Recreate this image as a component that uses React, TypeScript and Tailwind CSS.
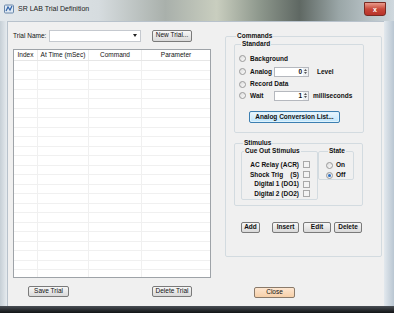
import React from 'react'

const font = "font-['Liberation_Sans',Arial,sans-serif]"

function Btn({ children, className = '' }: { children: React.ReactNode; className?: string }) {
  return (
    <button
      className={`h-[11px] border border-[#7a7a7a] rounded-[2px] bg-linear-to-b from-[#f7f7f7] to-[#d9d9d9] text-[6.5px] leading-none text-[#111] flex items-center justify-center ${className}`}
    >
      {children}
    </button>
  )
}

function Radio({ checked = false }: { checked?: boolean }) {
  return (
    <span className="w-[7px] h-[7px] shrink-0 rounded-full border border-[#9a9a9a] bg-linear-to-br from-[#dcdcdc] to-[#fbfbfb] flex items-center justify-center">
      {checked && <span className="w-[3px] h-[3px] rounded-full bg-[#2c6fc4]" />}
    </span>
  )
}

function Check() {
  return <span className="w-[7px] h-[7px] shrink-0 border border-[#a8a8a8] bg-[#f3f3f3]" />
}

function Spin({ value }: { value: string }) {
  return (
    <div className="w-[35px] h-[10px] border border-[#b5b8be] bg-white flex items-stretch">
      <span className="flex-1 text-right pr-[1px] leading-[8px] font-bold">{value}</span>
      <span className="w-[5px] flex flex-col items-center justify-center gap-[1px] bg-[#eef0f2]">
        <svg width="3" height="2" viewBox="0 0 3 2"><path d="M0 2L1.5 0L3 2Z" fill="#555" /></svg>
        <svg width="3" height="2" viewBox="0 0 3 2"><path d="M0 0L1.5 2L3 0Z" fill="#555" /></svg>
      </span>
    </div>
  )
}

function Group({ label, className = '', children }: { label: string; className?: string; children: React.ReactNode }) {
  return (
    <fieldset className={`border border-[#d3dbe0] rounded-[2px] ${className}`}>
      <legend className="ml-[2px] px-[1px] font-bold leading-[8px]">{label}</legend>
      {children}
    </fieldset>
  )
}

export default function App() {
  const rows = Array.from({ length: 23 })
  return (
    <div className={`w-[394px] h-[313px] flex flex-col overflow-hidden bg-[#cfd8df] text-[6.5px] text-[#111] ${font}`}>
      {/* title bar */}
      <div className="h-[21px] shrink-0 flex items-start bg-[linear-gradient(90deg,#e3e8ec_0%,#d6dcdf_25%,#a9b0ab_42%,#c9cebf_55%,#8d978c_66%,#5f6863_76%,#9aa6a7_86%,#cfd8de_100%)]">
        <svg className="ml-[4px] mt-[4px]" width="10" height="10" viewBox="0 0 10 10">
          <rect x="0.5" y="1" width="9" height="8" rx="1" fill="#dfe9f4" stroke="#6a88aa" />
          <path d="M2 7L4 3L6 6L8 2" stroke="#2f62a8" strokeWidth="1.2" fill="none" />
        </svg>
        <span className="ml-[4px] mt-[5px] text-[7px] leading-[8px] text-[#222]">SR LAB Trial Definition</span>
        <div className="ml-auto mr-[8px] w-[22px] h-[14px] mt-[2px] rounded-b-[3px] border border-[#7a2a22] bg-linear-to-b from-[#e99a8c] via-[#c8483a] to-[#b8322a] flex items-center justify-center">
          <span className="text-white font-bold text-[7px] leading-none">x</span>
        </div>
      </div>

      <div className="flex-1 flex">
        <div className="w-[7px] shrink-0 bg-linear-to-r from-[#c6cfd6] to-[#e6ebef]" />
        {/* client */}
        <div className="w-[377px] h-[285px] bg-[#f0f0f0] flex pl-[5px] pt-[7px] border-l border-t border-[#b8c2cc]">
          {/* left column */}
          <div className="w-[198px] flex flex-col">
            <div className="h-[13px] flex items-center">
              <span className="w-[36px]">Trial Name:</span>
              <div className="w-[92px] h-[12px] border border-[#c5c9cf] bg-white flex items-center justify-end pr-[3px]">
                <svg width="4" height="3" viewBox="0 0 4 3"><path d="M0 0H4L2 3Z" fill="#222" /></svg>
              </div>
              <Btn className="ml-[11px] w-[40px] h-[12px]">New Trial...</Btn>
            </div>
            <div className="mt-[7px] h-[229px] border border-[#9ea3a8] bg-white overflow-hidden">
              <div className="h-[11px] flex border-b border-[#e6e6e6] text-[6.5px]">
                <div className="w-[24px] flex items-center justify-center border-r border-[#ececec]">Index</div>
                <div className="w-[51px] flex items-center justify-center border-r border-[#ececec]">At Time (mSec)</div>
                <div className="w-[53px] flex items-center justify-center border-r border-[#ececec]">Command</div>
                <div className="flex-1 flex items-center justify-center">Parameter</div>
              </div>
              {rows.map((_, i) => (
                <div key={i} className="h-[9.5px] flex border-b border-[#f0f0f0]">
                  <div className="w-[24px] border-r border-[#f0f0f0]" />
                  <div className="w-[51px] border-r border-[#f0f0f0]" />
                  <div className="w-[53px] border-r border-[#f0f0f0]" />
                  <div className="flex-1" />
                </div>
              ))}
            </div>
            <div className="mt-[8px] flex">
              <Btn className="ml-[15px] w-[41px]">Save Trial</Btn>
              <Btn className="ml-[83px] w-[40px]">Delete Trial</Btn>
            </div>
          </div>

          {/* right column */}
          <div className="ml-[14px] w-[157px] flex flex-col">
            <Group label="Commands" className="h-[225px] mt-[3px] px-[8px] pb-[6px]">
              <Group label="Standard" className="w-[130px] h-[93px] pl-[4px]">
                <div className="flex flex-col font-bold pt-[4px]">
                  <div className="h-[13px] flex items-center gap-[4px]"><Radio /><span>Background</span></div>
                  <div className="h-[13px] flex items-center gap-[4px]"><Radio /><span className="w-[20px]">Analog</span><Spin value="0" /><span className="ml-[4px]">Level</span></div>
                  <div className="h-[12px] flex items-center gap-[4px]"><Radio /><span>Record Data</span></div>
                  <div className="h-[11px] flex items-center gap-[4px]"><Radio /><span className="w-[20px]">Wait</span><Spin value="1" /><span>milliseconds</span></div>
                  <button className="mt-[10px] ml-[10px] w-[91px] h-[12px] border border-[#3c7fb1] rounded-[2px] bg-linear-to-b from-[#eaf6fd] to-[#bee6fd] shadow-[inset_0_0_0_1px_#dff2fc] font-bold leading-none flex items-center justify-center">
                    Analog Conversion List...
                  </button>
                </div>
              </Group>
              <Group label="Stimulus" className="w-[129px] h-[67px] mt-[6px] pl-[6px] font-bold">
                <div className="flex">
                  <Group label="Cue Out Stimulus" className="w-[77px] h-[53px]">
                    <div className="flex flex-col items-end pr-[7px] pt-[5px]">
                      {['AC Relay (ACR)', 'Shock Trig    (S)', 'Digital 1 (DO1)', 'Digital 2 (DO2)'].map((t) => (
                        <div key={t} className="h-[9.7px] flex items-center gap-[4px]">
                          <span className="whitespace-pre">{t}</span>
                          <Check />
                        </div>
                      ))}
                    </div>
                  </Group>
                  <Group label="State" className="w-[36px] h-[33px] pl-[7px]">
                    <div className="flex flex-col pt-[5px]">
                      <div className="h-[10px] flex items-center gap-[3px]"><Radio /><span>On</span></div>
                      <div className="h-[10px] flex items-center gap-[3px]"><Radio checked /><span>Off</span></div>
                    </div>
                  </Group>
                </div>
              </Group>
              <div className="mt-[16px] ml-[7px] flex font-bold">
                <Btn className="w-[19px] font-bold">Add</Btn>
                <Btn className="ml-[12px] w-[27px] font-bold">Insert</Btn>
                <Btn className="ml-[4px] w-[28px] font-bold">Edit</Btn>
                <Btn className="ml-[3px] w-[28px] font-bold">Delete</Btn>
              </div>
            </Group>
            <button className="mt-[30px] ml-[29px] w-[41px] h-[11px] border border-[#8a7a6a] rounded-[2px] bg-linear-to-b from-[#fde6d0] to-[#f6cfa8] leading-none flex items-center justify-center">
              Close
            </button>
          </div>
        </div>
        <div className="flex-1 bg-linear-to-r from-[#e3e9ee] to-[#b9c6d2]" />
      </div>
      <div className="h-[7px] shrink-0 bg-linear-to-b from-[#4a4f55] to-[#121416]" />
    </div>
  )
}
